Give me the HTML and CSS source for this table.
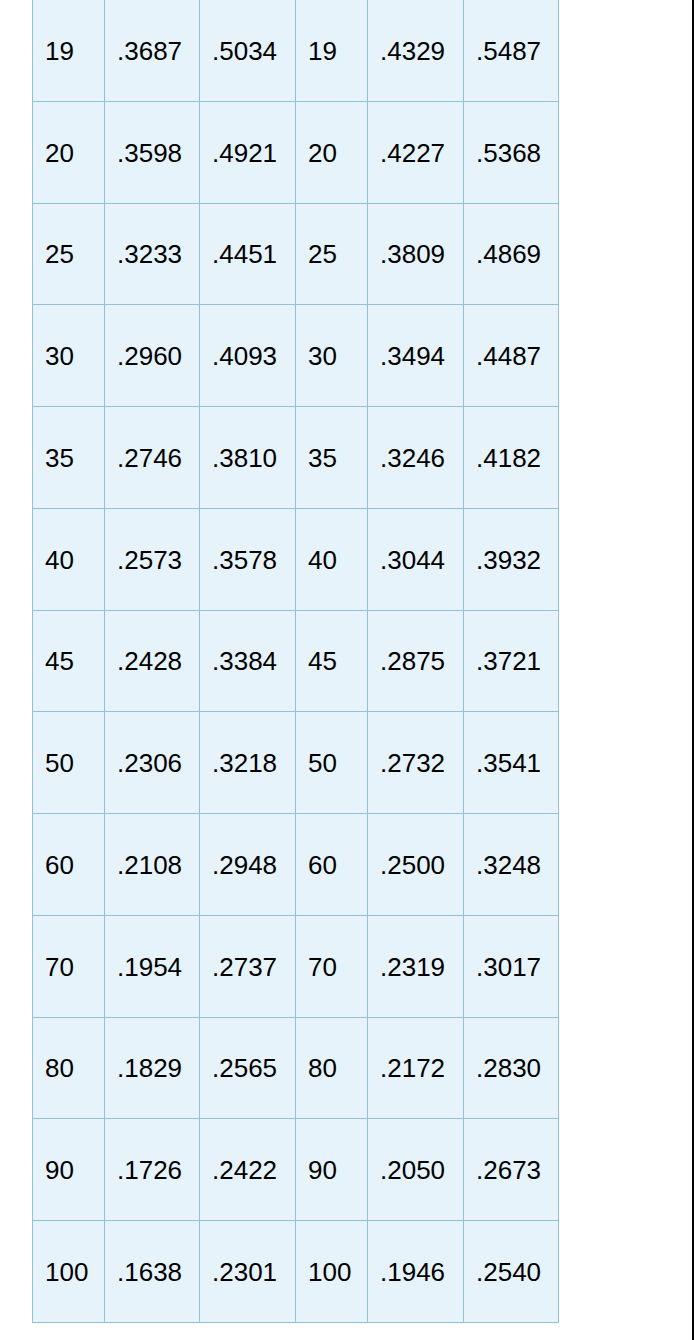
FILE: index.html
```html
<!DOCTYPE html>
<html lang="en">
<head>
<meta charset="utf-8">
<title>Table</title>
<link rel="stylesheet" href="styles.css">
</head>
<body>
<div class="page">
  <div class="grid">
    <div class="c">19</div><div class="c">.3687</div><div class="c">.5034</div><div class="c">19</div><div class="c">.4329</div><div class="c">.5487</div>
    <div class="c">20</div><div class="c">.3598</div><div class="c">.4921</div><div class="c">20</div><div class="c">.4227</div><div class="c">.5368</div>
    <div class="c">25</div><div class="c">.3233</div><div class="c">.4451</div><div class="c">25</div><div class="c">.3809</div><div class="c">.4869</div>
    <div class="c">30</div><div class="c">.2960</div><div class="c">.4093</div><div class="c">30</div><div class="c">.3494</div><div class="c">.4487</div>
    <div class="c">35</div><div class="c">.2746</div><div class="c">.3810</div><div class="c">35</div><div class="c">.3246</div><div class="c">.4182</div>
    <div class="c">40</div><div class="c">.2573</div><div class="c">.3578</div><div class="c">40</div><div class="c">.3044</div><div class="c">.3932</div>
    <div class="c">45</div><div class="c">.2428</div><div class="c">.3384</div><div class="c">45</div><div class="c">.2875</div><div class="c">.3721</div>
    <div class="c">50</div><div class="c">.2306</div><div class="c">.3218</div><div class="c">50</div><div class="c">.2732</div><div class="c">.3541</div>
    <div class="c">60</div><div class="c">.2108</div><div class="c">.2948</div><div class="c">60</div><div class="c">.2500</div><div class="c">.3248</div>
    <div class="c">70</div><div class="c">.1954</div><div class="c">.2737</div><div class="c">70</div><div class="c">.2319</div><div class="c">.3017</div>
    <div class="c">80</div><div class="c">.1829</div><div class="c">.2565</div><div class="c">80</div><div class="c">.2172</div><div class="c">.2830</div>
    <div class="c">90</div><div class="c">.1726</div><div class="c">.2422</div><div class="c">90</div><div class="c">.2050</div><div class="c">.2673</div>
    <div class="c">100</div><div class="c">.1638</div><div class="c">.2301</div><div class="c">100</div><div class="c">.1946</div><div class="c">.2540</div>
  </div>
</div>
</body>
</html>
```
FILE: styles.css
```css
html, body {
  margin: 0;
  padding: 0;
  background: #ffffff;
}

.page {
  box-sizing: border-box;
  width: 694px;
  height: 1340px;
  overflow: hidden;
  padding-left: 32px;
  border-right: 2px solid #000000;
}

.grid {
  display: grid;
  grid-template-columns: 72px 95px 96px 72px 96px 95px;
  grid-auto-rows: 101.75px;
  width: max-content;
  margin-top: -1px;
  border-left: 1px solid #93bfd8;
  border-top: 1px solid #93bfd8;
  background: #e6f3fa;
  font-family: "Liberation Sans", Arial, sans-serif;
  font-size: 26px;
  color: #000000;
}

.c {
  box-sizing: border-box;
  display: flex;
  align-items: center;
  padding: 2px 0 0 12px;
  border-right: 1px solid #93bfd8;
  border-bottom: 1px solid #93bfd8;
}
```
